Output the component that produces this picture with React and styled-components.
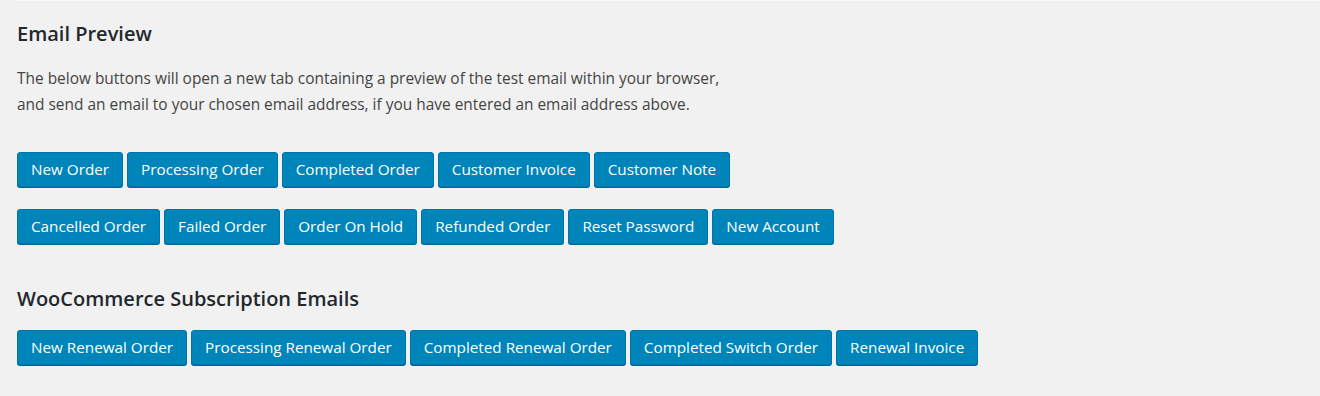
import styled, { createGlobalStyle } from "styled-components";

const GlobalStyle = createGlobalStyle`
  html, body {
    margin: 0;
    padding: 0;
    background: #f1f1f1;
  }
  body {
    font-family: "Open Sans", "Noto Sans", sans-serif;
  }
`;

const Page = styled.div`
  margin-left: 17px;
  border-top: 1px solid #f9f9f9;
  padding-bottom: 30px;
`;

const Title = styled.h2`
  margin: ${(p) => (p.$tight ? "42px 0 18px" : "20px 0 18px")};
  font-size: 20px;
  line-height: 26px;
  font-weight: 600;
  color: #23282d;
`;

const Intro = styled.p`
  margin: 0 0 35px;
  font-size: 15.45px;
  line-height: 26px;
  color: #444;
`;

const ButtonRow = styled.div`
  display: flex;
  flex-wrap: wrap;
  gap: 4px;
  margin-bottom: ${(p) => (p.$last ? "0" : "22px")};
`;

const PreviewButton = styled.button`
  box-sizing: border-box;
  height: 35px;
  padding: 0 13px;
  border: 1px solid #0073aa;
  border-radius: 3px;
  background: #0085ba;
  box-shadow: 0 1px 0 #006799;
  color: #fff;
  font-family: inherit;
  font-size: 15.25px;
  line-height: 33px;
  white-space: nowrap;
  cursor: pointer;
`;

const rows = [
  ["New Order", "Processing Order", "Completed Order", "Customer Invoice", "Customer Note"],
  ["Cancelled Order", "Failed Order", "Order On Hold", "Refunded Order", "Reset Password", "New Account"],
];

const subscriptionRow = [
  "New Renewal Order",
  "Processing Renewal Order",
  "Completed Renewal Order",
  "Completed Switch Order",
  "Renewal Invoice",
];

export default function App() {
  return (
    <>
      <GlobalStyle />
      <Page>
        <Title>Email Preview</Title>
        <Intro>
          The below buttons will open a new tab containing a preview of the test email within your browser,
          <br />
          and send an email to your chosen email address, if you have entered an email address above.
        </Intro>
        {rows.map((row, i) => (
          <ButtonRow key={i} $last={i === rows.length - 1}>
            {row.map((label) => (
              <PreviewButton key={label}>{label}</PreviewButton>
            ))}
          </ButtonRow>
        ))}
        <Title $tight>WooCommerce Subscription Emails</Title>
        <ButtonRow $last>
          {subscriptionRow.map((label) => (
            <PreviewButton key={label}>{label}</PreviewButton>
          ))}
        </ButtonRow>
      </Page>
    </>
  );
}
